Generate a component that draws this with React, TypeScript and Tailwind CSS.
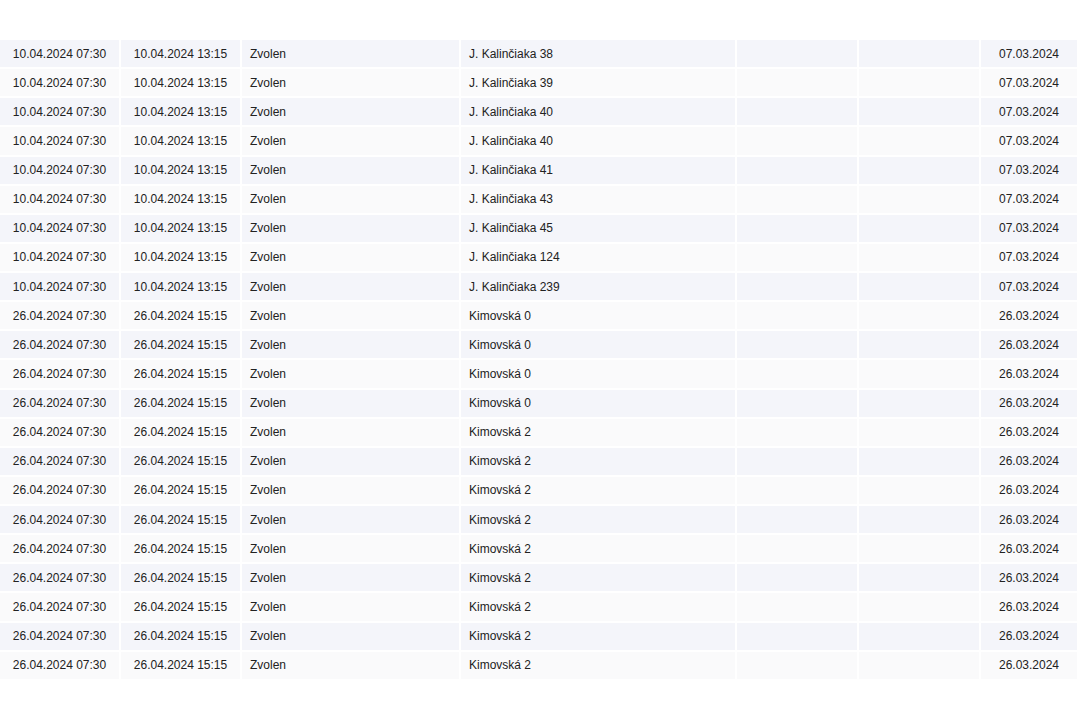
import React from 'react';

type Row = { from: string; to: string; city: string; street: string; date: string };

const kal = ['38', '39', '40', '40', '41', '43', '45', '124', '239'];

const rows: Row[] = [
  ...kal.map((n) => ({
    from: '10.04.2024 07:30',
    to: '10.04.2024 13:15',
    city: 'Zvolen',
    street: `J. Kalinčiaka ${n}`,
    date: '07.03.2024',
  })),
  ...['0', '0', '0', '0', '2', '2', '2', '2', '2', '2', '2', '2', '2'].map((n) => ({
    from: '26.04.2024 07:30',
    to: '26.04.2024 15:15',
    city: 'Zvolen',
    street: `Kimovská ${n}`,
    date: '26.03.2024',
  })),
];

export default function App() {
  return (
    <div className="w-[1080px] h-[720px] bg-white pt-[40px] text-[12px] text-[#222] font-['Liberation_Sans',Arial,sans-serif]">
      <div className="flex flex-col gap-y-[2px] w-[1077px]">
        {rows.map((r, i) => {
          const bg = i % 2 === 0 ? 'bg-[#f4f5fa]' : 'bg-[#fafafb]';
          return (
            <div
              key={i}
              className="grid grid-cols-[119px_119px_217px_274px_120px_120px_96px] gap-x-[2px] h-[27.14px]"
            >
              <div className={`${bg} flex items-center justify-center`}>{r.from}</div>
              <div className={`${bg} flex items-center justify-center`}>{r.to}</div>
              <div className={`${bg} flex items-center pl-[8px]`}>{r.city}</div>
              <div className={`${bg} flex items-center pl-[8px]`}>{r.street}</div>
              <div className={bg} />
              <div className={bg} />
              <div className={`${bg} flex items-center justify-center`}>{r.date}</div>
            </div>
          );
        })}
      </div>
    </div>
  );
}
